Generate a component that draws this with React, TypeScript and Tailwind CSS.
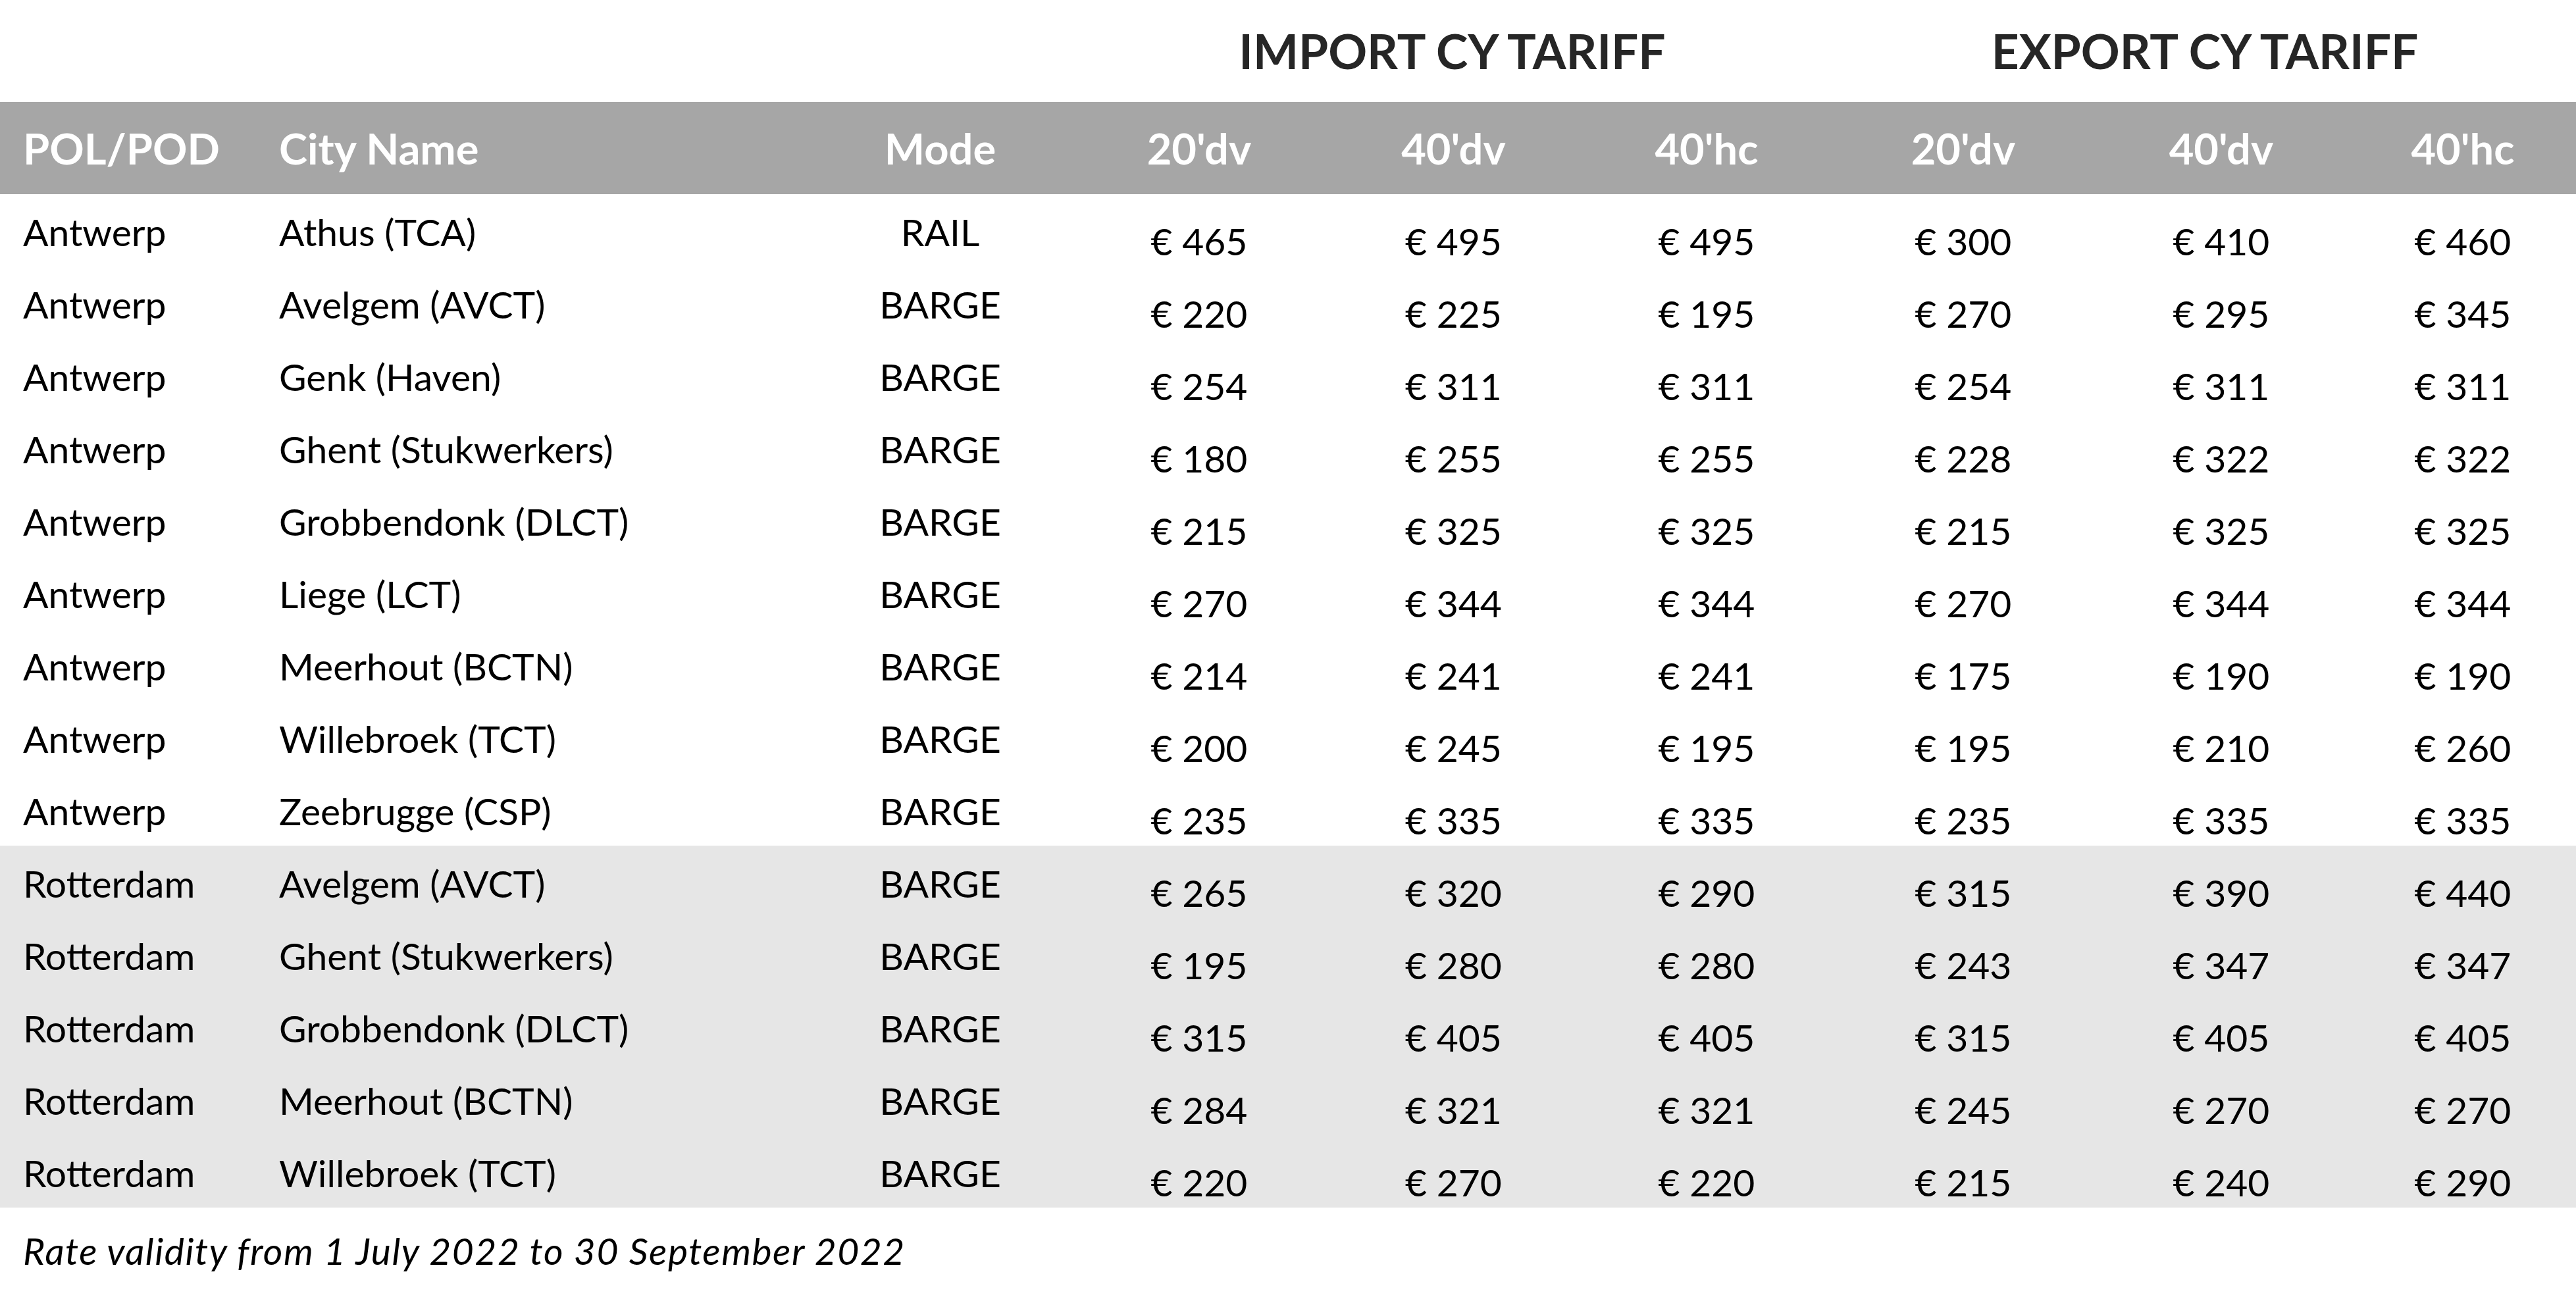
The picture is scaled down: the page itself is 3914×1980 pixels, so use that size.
const rows = [
  ['Antwerp', 'Athus (TCA)', 'RAIL', 465, 495, 495, 300, 410, 460],
  ['Antwerp', 'Avelgem (AVCT)', 'BARGE', 220, 225, 195, 270, 295, 345],
  ['Antwerp', 'Genk (Haven)', 'BARGE', 254, 311, 311, 254, 311, 311],
  ['Antwerp', 'Ghent (Stukwerkers)', 'BARGE', 180, 255, 255, 228, 322, 322],
  ['Antwerp', 'Grobbendonk (DLCT)', 'BARGE', 215, 325, 325, 215, 325, 325],
  ['Antwerp', 'Liege (LCT)', 'BARGE', 270, 344, 344, 270, 344, 344],
  ['Antwerp', 'Meerhout (BCTN)', 'BARGE', 214, 241, 241, 175, 190, 190],
  ['Antwerp', 'Willebroek (TCT)', 'BARGE', 200, 245, 195, 195, 210, 260],
  ['Antwerp', 'Zeebrugge (CSP)', 'BARGE', 235, 335, 335, 235, 335, 335],
  ['Rotterdam', 'Avelgem (AVCT)', 'BARGE', 265, 320, 290, 315, 390, 440],
  ['Rotterdam', 'Ghent (Stukwerkers)', 'BARGE', 195, 280, 280, 243, 347, 347],
  ['Rotterdam', 'Grobbendonk (DLCT)', 'BARGE', 315, 405, 405, 315, 405, 405],
  ['Rotterdam', 'Meerhout (BCTN)', 'BARGE', 284, 321, 321, 245, 270, 270],
  ['Rotterdam', 'Willebroek (TCT)', 'BARGE', 220, 270, 220, 215, 240, 290],
] as const;

const sizes = ["20'dv", "40'dv", "40'hc", "20'dv", "40'dv", "40'hc"];

const cols = 'grid grid-cols-[389px_841px_397px_390px_383px_386px_394px_390px_344px]';

export default function App() {
  return (
    <div className="w-[3914px] h-[1980px] bg-white font-[Lato,sans-serif] text-black overflow-hidden">
      <div className={`${cols} h-[155px] text-[73px] font-bold text-[#262626] leading-none`}>
        <div className="col-start-4 col-span-3 flex items-center justify-center">IMPORT CY TARIFF</div>
        <div className="col-span-3 flex items-center justify-center">EXPORT CY TARIFF</div>
      </div>

      <div className={`${cols} h-[140px] bg-[#a6a6a6] text-white text-[65px] font-bold leading-none`}>
        <div className="flex items-center pl-[35px]">POL/POD</div>
        <div className="flex items-center pl-[35px]">City Name</div>
        <div className="flex items-center justify-center">Mode</div>
        {sizes.map((s, i) => (
          <div key={i} className="flex items-center justify-center">{s}</div>
        ))}
      </div>

      {rows.map((r, i) => (
        <div
          key={i}
          className={`${cols} h-[110px] text-[57px] leading-none ${i >= 9 ? 'bg-[#e6e6e6]' : ''}`}
        >
          <div className="pl-[35px] pt-[29px] whitespace-nowrap">{r[0]}</div>
          <div className="pl-[35px] pt-[29px] whitespace-nowrap">{r[1]}</div>
          <div className="pt-[29px] text-center">{r[2]}</div>
          {r.slice(3).map((v, j) => (
            <div key={j} className="pt-[43px] text-center whitespace-nowrap">€ {v}</div>
          ))}
        </div>
      ))}

      <div className="pl-[35px] pt-[37px] text-[57px] italic leading-none tracking-[1.5px] whitespace-nowrap">
        Rate validity from 1 July 2022 to 30 September 2022
      </div>
    </div>
  );
}
